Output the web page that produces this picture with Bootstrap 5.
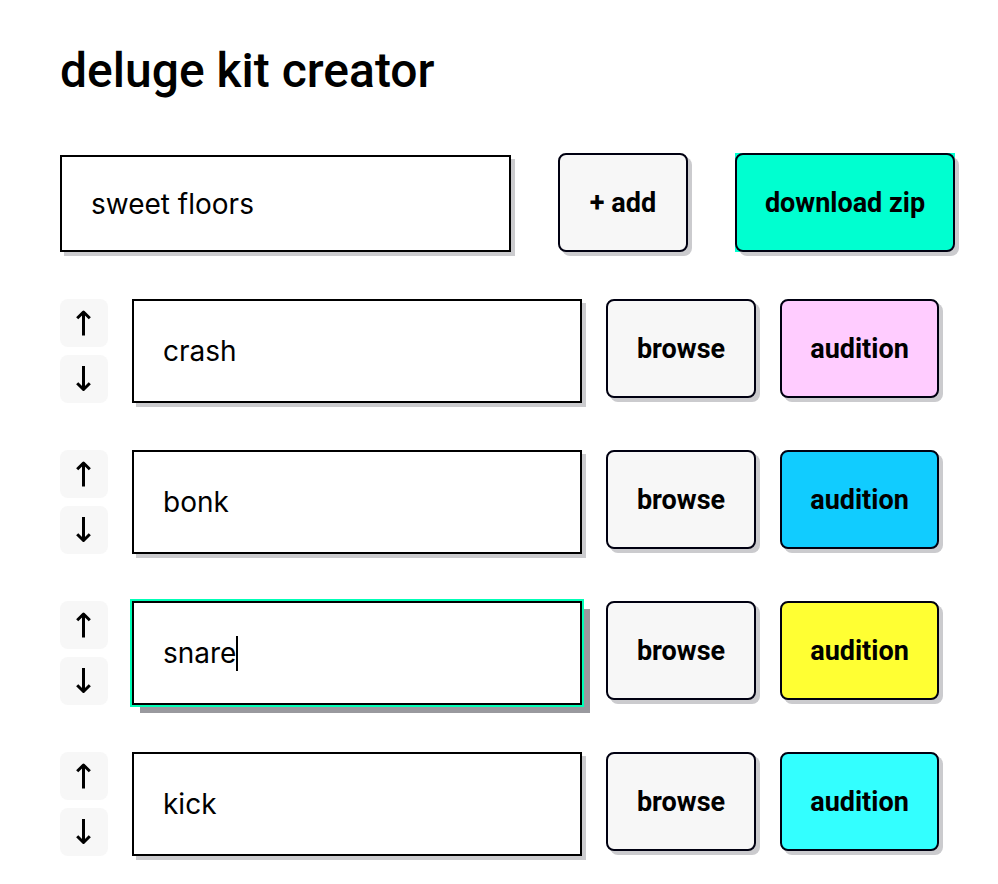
<!DOCTYPE html>
<html lang="en">
<head>
<meta charset="utf-8">
<meta name="viewport" content="width=device-width, initial-scale=1">
<title>deluge kit creator</title>
<link href="https://cdn.jsdelivr.net/npm/bootstrap@5.3.0/dist/css/bootstrap.min.css" rel="stylesheet">
<style>
  body { font-family: Inter, "Liberation Sans", sans-serif; color: #000; background: #fff; }
  .kit-page { padding: 43px 43px 24px 60px; }
  .kit-title { font: 500 48px/56px Roboto, sans-serif; margin-bottom: 54px; }
  .kit-head { gap: 47px; margin-bottom: 47px; }
  .kit-rows { gap: 47px; padding-right: 16px; }
  .kit-row { gap: 24px; }
  .kit-input { min-width: 0; width: 100%; height: 104px; padding: 0 29px; font-size: 28px; line-height: 36px;
    color: #000; border: 2px solid #000; border-radius: 0; background: #fff; box-shadow: 4px 4px #cbcbce; }
  .kit-head .kit-input { height: 97px; }
  .kit-input:focus, .kit-input.editing { border-color: #000; outline: 2px solid #00ffb7; box-shadow: 8px 8px #99999e; caret-color: transparent; }
  .kit-btn { --bs-btn-border-radius: 8px; height: 99px; padding: 0; font: 700 27px/32px Roboto, sans-serif;
    color: #000; background: #f7f7f7; border: 2px solid #000011; box-shadow: 4px 4px #cbcbce; }
  .kit-btn:hover { color: #000; border-color: #000011; background: #eee; }
  .w-add { width: 130px; }
  .w-zip { width: 220px; }
  .w-browse { width: 150px; }
  .w-audition { width: 159px; }
  .zip-back, .kit-btn.zip { background: #00ffd0; }
  .pink { background: #ffccff; }
  .blue { background: #11ccff; }
  .yellow { background: #ffff33; }
  .cyan { background: #33ffff; }
  .move-btn { width: 48px; height: 48px; border: 0; border-radius: 8px; background: #f7f7f7; }
  .caret-line { padding-left: 31px; font-size: 28px; }
  .caret-line span { height: 35px; line-height: 35px; color: transparent; border-right: 2px solid #000; }
</style>
<script src="https://cdn.jsdelivr.net/npm/bootstrap@5.3.0/dist/js/bootstrap.bundle.min.js"></script>
</head>
<body>
<svg class="d-none" aria-hidden="true">
  <symbol id="up" viewBox="0 0 16 26"><path d="M7.500 25.500V2M1.200 8.200L7.500 2L13.800 8.200" fill="none" stroke="#000" stroke-width="3" stroke-linejoin="round"/></symbol>
  <symbol id="down" viewBox="0 0 16 26"><path d="M7.500 0V23.500M1.200 17.300L7.500 23.500L13.800 17.300" fill="none" stroke="#000" stroke-width="3" stroke-linejoin="round"/></symbol>
</svg>
<main class="kit-page">
  <h1 class="kit-title">deluge kit creator</h1>
  <div class="kit-head d-flex align-items-end">
    <div class="flex-fill"><input class="kit-input d-block" type="text" value="sweet floors" aria-label="Kit name"></div>
    <button type="button" class="btn kit-btn w-add flex-shrink-0">+ add</button>
    <div class="zip-back flex-shrink-0"><button type="button" class="btn kit-btn zip w-zip d-block">download zip</button></div>
  </div>
  <div class="kit-rows d-flex flex-column">
    <div class="kit-row d-flex align-items-start">
      <div class="d-flex flex-column gap-2">
        <button type="button" class="move-btn p-0 d-flex align-items-center justify-content-center" aria-label="Move crash up"><svg width="16" height="26"><use href="#up"/></svg></button>
        <button type="button" class="move-btn p-0 d-flex align-items-center justify-content-center" aria-label="Move crash down"><svg width="16" height="26"><use href="#down"/></svg></button>
      </div>
      <div class="flex-fill"><input class="kit-input d-block" type="text" value="crash" aria-label="Sound 1 name"></div>
      <button type="button" class="btn kit-btn w-browse flex-shrink-0">browse</button>
      <button type="button" class="btn kit-btn w-audition flex-shrink-0 pink">audition</button>
    </div>
    <div class="kit-row d-flex align-items-start">
      <div class="d-flex flex-column gap-2">
        <button type="button" class="move-btn p-0 d-flex align-items-center justify-content-center" aria-label="Move bonk up"><svg width="16" height="26"><use href="#up"/></svg></button>
        <button type="button" class="move-btn p-0 d-flex align-items-center justify-content-center" aria-label="Move bonk down"><svg width="16" height="26"><use href="#down"/></svg></button>
      </div>
      <div class="flex-fill"><input class="kit-input d-block" type="text" value="bonk" aria-label="Sound 2 name"></div>
      <button type="button" class="btn kit-btn w-browse flex-shrink-0">browse</button>
      <button type="button" class="btn kit-btn w-audition flex-shrink-0 blue">audition</button>
    </div>
    <div class="kit-row d-flex align-items-start">
      <div class="d-flex flex-column gap-2">
        <button type="button" class="move-btn p-0 d-flex align-items-center justify-content-center" aria-label="Move snare up"><svg width="16" height="26"><use href="#up"/></svg></button>
        <button type="button" class="move-btn p-0 d-flex align-items-center justify-content-center" aria-label="Move snare down"><svg width="16" height="26"><use href="#down"/></svg></button>
      </div>
      <div class="flex-fill position-relative">
        <input class="kit-input editing d-block" type="text" value="snare" aria-label="Sound 3 name">
        <div class="caret-line position-absolute top-0 start-0 h-100 d-flex align-items-center pe-none" aria-hidden="true"><span>snare</span></div>
      </div>
      <button type="button" class="btn kit-btn w-browse flex-shrink-0">browse</button>
      <button type="button" class="btn kit-btn w-audition flex-shrink-0 yellow">audition</button>
    </div>
    <div class="kit-row d-flex align-items-start">
      <div class="d-flex flex-column gap-2">
        <button type="button" class="move-btn p-0 d-flex align-items-center justify-content-center" aria-label="Move kick up"><svg width="16" height="26"><use href="#up"/></svg></button>
        <button type="button" class="move-btn p-0 d-flex align-items-center justify-content-center" aria-label="Move kick down"><svg width="16" height="26"><use href="#down"/></svg></button>
      </div>
      <div class="flex-fill"><input class="kit-input d-block" type="text" value="kick" aria-label="Sound 4 name"></div>
      <button type="button" class="btn kit-btn w-browse flex-shrink-0">browse</button>
      <button type="button" class="btn kit-btn w-audition flex-shrink-0 cyan">audition</button>
    </div>
  </div>
</main>
</body>
</html>
